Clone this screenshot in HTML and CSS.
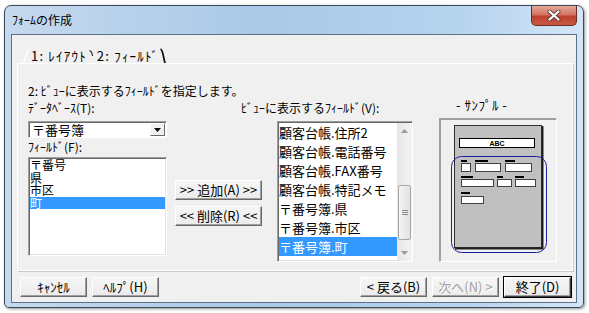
FILE: index.html
```html
<!DOCTYPE html>
<html lang="ja">
<head>
    <meta charset="UTF-8">
    <title>ﾌｫｰﾑの作成</title>
    <link rel="stylesheet" href="styles.css">
</head>
<body>
    <div class="window">
        <div class="titlebar">
            <span class="title">ﾌｫｰﾑの作成</span>
            <div class="close-btn">
                <svg width="14" height="11" viewBox="0 0 14 11">
                    <path d="M2.5 1.5 L11.5 9.5 M11.5 1.5 L2.5 9.5" stroke="#5a3a36" stroke-width="4" stroke-linecap="round"/>
                    <path d="M2.5 1.5 L11.5 9.5 M11.5 1.5 L2.5 9.5" stroke="#fff" stroke-width="2.2" stroke-linecap="round"/>
                </svg>
            </div>
        </div>

        <div class="client">
            <div class="tabs">
                <svg class="tab-edge" width="7" height="15" viewBox="0 0 7 15">
                    <path d="M0.5 15 L5.5 1" stroke="#fff" stroke-width="1.2" fill="none"/>
                </svg>
                <span class="tab">1: ﾚｲｱｳﾄ</span>
                <svg class="tab-sep" width="10" height="15" viewBox="0 0 10 15">
                    <path d="M2.5 2.5 Q5 3.5 5.5 8" stroke="#333" stroke-width="1.3" fill="none"/>
                </svg>
                <span class="tab active">2: ﾌｨｰﾙﾄﾞ</span>
                <svg class="tab-end" width="8" height="15" viewBox="0 0 8 15">
                    <path d="M1.5 1 C4 2 4 8 6 15" stroke="#111" stroke-width="1.8" fill="none"/>
                </svg>
            </div>

            <div class="panel">
                <p class="instruction">2: ﾋﾞｭｰに表示するﾌｨｰﾙﾄﾞを指定します。</p>

                <div class="columns">
                    <div class="col-left">
                        <div class="field-label">ﾃﾞｰﾀﾍﾞｰｽ(T):</div>
                        <div class="combo">
                            <span class="combo-text">〒番号簿</span>
                            <span class="combo-btn">
                                <svg width="7" height="4" viewBox="0 0 7 4"><path d="M0 0 H7 L3.5 4 Z" fill="#000"/></svg>
                            </span>
                        </div>
                        <div class="field-label second">ﾌｨｰﾙﾄﾞ(F):</div>
                        <ul class="listbox fields">
                            <li>〒番号</li>
                            <li>県</li>
                            <li>市区</li>
                            <li class="selected">町</li>
                        </ul>
                    </div>

                    <div class="col-mid">
                        <button class="btn">&gt;&gt; 追加(A) &gt;&gt;</button>
                        <button class="btn">&lt;&lt; 削除(R) &lt;&lt;</button>
                    </div>

                    <div class="col-right">
                        <div class="field-label view-label">ﾋﾞｭｰに表示するﾌｨｰﾙﾄﾞ(V):</div>
                        <div class="listbox view">
                            <ul class="view-items">
                                <li>顧客台帳.住所2</li>
                                <li>顧客台帳.電話番号</li>
                                <li>顧客台帳.FAX番号</li>
                                <li>顧客台帳.特記メモ</li>
                                <li>〒番号簿.県</li>
                                <li>〒番号簿.市区</li>
                                <li class="selected">〒番号簿.町</li>
                            </ul>
                            <div class="scrollbar">
                                <div class="scroll-arrow">
                                    <svg width="7" height="4" viewBox="0 0 7 4"><path d="M0 4 H7 L3.5 0 Z" fill="#9a9a9a"/></svg>
                                </div>
                                <div class="scroll-track">
                                    <div class="scroll-thumb">
                                        <svg width="6" height="6" viewBox="0 0 6 6"><path d="M0 0.5 H6 M0 2.5 H6 M0 4.5 H6" stroke="#8a8a8a"/></svg>
                                    </div>
                                </div>
                                <div class="scroll-arrow">
                                    <svg width="7" height="4" viewBox="0 0 7 4"><path d="M0 0 H7 L3.5 4 Z" fill="#9a9a9a"/></svg>
                                </div>
                            </div>
                        </div>
                    </div>

                    <div class="col-sample">
                        <div class="sample-label">- ｻﾝﾌﾟﾙ -</div>
                        <div class="sample-frame">
                            <svg width="116" height="142" viewBox="0 0 116 142">
                                <!-- form body -->
                                <rect x="14.5" y="6.5" width="87" height="122" fill="#c0c0c0" stroke="#303030"/>
                                <path d="M102.5 7 V129.5 H15" stroke="#202020" stroke-width="2" fill="none"/>
                                <!-- title box -->
                                <rect x="19.5" y="19.5" width="75" height="9" fill="#fff" stroke="#000"/>
                                <text x="57" y="27" font-size="7" font-weight="bold" text-anchor="middle" font-family="Liberation Sans, sans-serif">ABC</text>
                                <!-- row 1 -->
                                <rect x="21" y="41" width="6" height="2" fill="#000"/>
                                <rect x="35" y="41" width="13" height="2" fill="#000"/>
                                <rect x="65" y="41" width="10" height="2" fill="#000"/>
                                <rect x="21.5" y="44.5" width="9" height="8" fill="#fff" stroke="#404040"/>
                                <rect x="35.5" y="44.5" width="25" height="8" fill="#fff" stroke="#404040"/>
                                <rect x="65.5" y="44.5" width="26" height="8" fill="#fff" stroke="#404040"/>
                                <!-- row 2 -->
                                <rect x="21" y="57" width="12" height="2" fill="#000"/>
                                <rect x="57" y="57" width="6" height="2" fill="#000"/>
                                <rect x="75" y="57" width="9" height="2" fill="#000"/>
                                <rect x="21.5" y="60.5" width="32" height="7" fill="#fff" stroke="#404040"/>
                                <rect x="57.5" y="60.5" width="14" height="7" fill="#fff" stroke="#404040"/>
                                <rect x="75.5" y="60.5" width="20" height="7" fill="#fff" stroke="#404040"/>
                                <!-- row 3 -->
                                <rect x="21" y="73" width="9" height="2" fill="#000"/>
                                <rect x="21.5" y="77.5" width="22" height="7" fill="#fff" stroke="#404040"/>
                                <!-- selection outline -->
                                <rect x="11.5" y="37.5" width="95" height="96" rx="10" fill="none" stroke="#1c1c9c"/>
                            </svg>
                        </div>
                    </div>
                </div>
            </div>

            <div class="footer">
                <button class="btn wide">ｷｬﾝｾﾙ</button>
                <button class="btn wide">ﾍﾙﾌﾟ(H)</button>
                <span class="spacer"></span>
                <button class="btn wide">&lt; 戻る(B)</button>
                <button class="btn wide" disabled>次へ(N) &gt;</button>
                <button class="btn wide default">終了(D)</button>
            </div>
        </div>
    </div>
</body>
</html>
```

FILE: styles.css
```css
body {
    margin: 0;
    padding: 5px 5px 5px 4px;
    background-color: #fff;
    font-family: "Noto Sans CJK JP", "Noto Sans", sans-serif;
    font-size: 12px;
    color: #000;
}
.window {
    box-sizing: border-box;
    width: 580px;
    height: 303px;
    border: 1px solid #3c4a58;
    border-radius: 7px 7px 5px 5px;
    background: linear-gradient(90deg, #c4d9ee 0%, #a9c9e8 45%, #b7d4ef 80%, #d3e6f7 100%);
    box-shadow: 1px 1px 3px rgba(0, 0, 0, 0.45);
    padding: 0 6px 4px 6px;
}
.titlebar {
    height: 28px;
    display: flex;
    align-items: center;
    margin-left: 1px;
}
.title {
    flex: 1;
    line-height: 14px;
}
.close-btn {
    align-self: flex-start;
    width: 44px;
    height: 19px;
    border: 1px solid #6a2b22;
    border-top: none;
    border-radius: 0 0 5px 5px;
    background: linear-gradient(#e6a896 0%, #d27565 45%, #c0402e 55%, #c65a44 100%);
    display: flex;
    align-items: center;
    justify-content: center;
}
.client {
    box-sizing: border-box;
    height: 269px;
    border: 1px solid #5f7186;
    background-color: #f0f0f0;
    display: flex;
    flex-direction: column;
}
.tabs {
    display: flex;
    align-items: flex-start;
    height: 15px;
    margin-top: 13px;
    padding-left: 11px;
}
.tab {
    font-size: 13px;
    line-height: 15px;
    letter-spacing: 1.2px;
    white-space: nowrap;
}
.tab-edge {
    margin-right: 1px;
}
.panel {
    box-sizing: border-box;
    height: 208px;
    margin: 0 3px 0 5px;
    border: 1px solid #fff;
    box-shadow: 1px 1px 0 #c9c9c9;
    padding: 20px 0 0 10px;
}
.instruction {
    margin: 0;
    line-height: 14px;
}
.columns {
    display: flex;
    align-items: flex-start;
    margin-top: 3px;
}
.field-label {
    line-height: 14px;
    white-space: nowrap;
}
.field-label.second {
    margin-top: 2px;
}
.col-left {
    width: 139px;
}
.combo {
    box-sizing: border-box;
    height: 17px;
    margin-top: 6px;
    background: #fff;
    border: 1px solid;
    border-color: #a0a0a0 #fff #fff #a0a0a0;
    box-shadow: inset 1px 1px 0 #696969;
    display: flex;
    align-items: center;
    padding-left: 3px;
}
.combo-text {
    flex: 1;
    font-size: 13px;
    line-height: 14px;
}
.combo-btn {
    box-sizing: border-box;
    width: 15px;
    height: 13px;
    margin-right: 1px;
    background: #f0f0f0;
    border: 1px solid;
    border-color: #fff #696969 #696969 #fff;
    display: flex;
    align-items: center;
    justify-content: center;
}
.listbox {
    box-sizing: border-box;
    margin: 0;
    padding: 0;
    list-style: none;
    background: #fff;
    border: 1px solid;
    border-color: #a0a0a0 #fff #fff #a0a0a0;
    box-shadow: inset 1px 1px 0 #696969, inset -1px -1px 0 #e3e3e3;
}
.fields {
    height: 99px;
    margin-top: 3px;
    padding: 1px 1px 0 1px;
}
.fields li {
    height: 12.5px;
    line-height: 12.5px;
    font-size: 12px;
}
.selected {
    background-color: #3399ff;
    color: #fff;
}
.col-mid {
    width: 87px;
    margin-left: 8px;
    padding-top: 79px;
    display: flex;
    flex-direction: column;
    gap: 6px;
}
.btn {
    box-sizing: border-box;
    height: 20px;
    padding: 0;
    font-family: inherit;
    font-size: 13px;
    line-height: 14px;
    color: #000;
    background: linear-gradient(#f6f6f6, #ebebeb);
    border: 1px solid;
    border-color: #fff #696969 #696969 #fff;
    box-shadow: inset -1px -1px 0 #a0a0a0;
    white-space: nowrap;
}
.btn:disabled {
    color: #a0a0a0;
    text-shadow: 1px 1px 0 #fff;
}
.btn.default {
    outline: 1px solid #000;
    border-color: #fff #404040 #404040 #fff;
}
.col-right {
    width: 136px;
    margin-left: 15px;
}
.view-label {
    margin-left: -36px;
}
.view {
    height: 141px;
    margin-top: 6px;
    padding: 1px 0 0 1px;
    display: flex;
    overflow: hidden;
}
.view-items {
    flex: 1;
    margin: 0;
    padding: 0;
    list-style: none;
}
.view-items li {
    height: 19px;
    line-height: 19px;
    font-size: 13px;
    white-space: nowrap;
}
.scrollbar {
    width: 15px;
    display: flex;
    flex-direction: column;
    background: linear-gradient(90deg, #e6e6e6, #f3f3f3);
}
.scroll-arrow {
    height: 16px;
    display: flex;
    align-items: center;
    justify-content: center;
}
.scroll-track {
    flex: 1;
    padding-top: 46px;
}
.scroll-thumb {
    box-sizing: border-box;
    height: 55px;
    margin: 0 1px;
    border: 1px solid #a8a8a8;
    border-radius: 2px;
    background: linear-gradient(90deg, #f4f4f4, #e2e2e2);
    display: flex;
    align-items: center;
    justify-content: center;
}
.col-sample {
    width: 118px;
    margin-left: 26px;
    margin-top: -3px;
}
.sample-label {
    font-size: 13px;
    line-height: 14px;
    letter-spacing: 0.5px;
    padding-left: 17px;
}
.sample-frame {
    box-sizing: border-box;
    height: 144px;
    margin-top: 6px;
    border: 1px solid;
    border-color: #a0a0a0 #fff #fff #a0a0a0;
    box-shadow: 1px 1px 0 #a0a0a0 inset;
}
.sample-frame svg {
    display: block;
}
.footer {
    display: flex;
    gap: 5px;
    margin-top: 6px;
    padding: 0 5px 0 8px;
}
.btn.wide {
    width: 67px;
}
.spacer {
    flex: 1;
}
```
